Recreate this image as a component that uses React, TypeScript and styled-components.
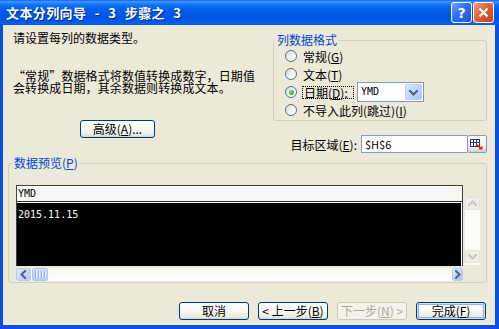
import React from "react";
import styled, { createGlobalStyle, css } from "styled-components";

const Global = createGlobalStyle`
  html, body { margin: 0; padding: 0; background: #ECE9D8; }
  body {
    font-family: "Noto Sans CJK SC", "Noto Sans", sans-serif;
    font-size: 12px;
    color: #000;
  }
  * { box-sizing: border-box; }
`;

const Window = styled.div`
  width: 499px;
  height: 329px;
  display: flex;
  flex-direction: column;
  overflow: hidden;
`;

const TitleBar = styled.div`
  height: 25px;
  flex: none;
  display: flex;
  align-items: center;
  justify-content: space-between;
  padding: 0 5px 0 6px;
  background: linear-gradient(
    to bottom,
    #0A5EEC 0%,
    #3E93FF 6%,
    #2A86FF 12%,
    #0D6FF6 22%,
    #0560EC 35%,
    #0257E5 55%,
    #0055E3 75%,
    #0258EA 88%,
    #0764F4 95%,
    #0451DA 100%
  );
`;

const TitleText = styled.div`
  color: #fff;
  font-weight: 700;
  font-size: 13px;
  letter-spacing: 0.4px;
  word-spacing: 5px;
  text-shadow: 1px 1px 0 #0A2A8A;
  white-space: nowrap;
`;

const CaptionButtons = styled.div`
  display: flex;
  gap: 1px;
`;

const CaptionButton = styled.div<{ $kind: "help" | "close" }>`
  width: 21px;
  height: 21px;
  border: 1px solid #fff;
  border-radius: 3px;
  display: flex;
  align-items: center;
  justify-content: center;
  color: #fff;
  font-family: "DejaVu Sans", sans-serif;
  font-weight: 700;
  font-size: 14px;
  ${(p) =>
    p.$kind === "help"
      ? css`
          background: linear-gradient(135deg, #6FA4FF 0%, #2D6FF0 45%, #1E55D6 100%);
        `
      : css`
          background: linear-gradient(135deg, #F19A7C 0%, #E0653C 45%, #C2401A 100%);
        `}
`;

const Content = styled.div`
  flex: 1;
  display: flex;
  flex-direction: column;
  background: #ECE9D8;
  border-style: solid;
  border-color: #0A4FDD;
  border-width: 0 4px 4px 3px;
`;

const Top = styled.div`
  display: grid;
  grid-template-columns: 267px 1fr;
  height: 128px;
`;

const LeftCol = styled.div`
  display: flex;
  flex-direction: column;
  align-items: flex-start;
  padding: 7px 0 0 10px;
`;

const Intro = styled.div`
  line-height: 12px;
  height: 12px;
  white-space: nowrap;
`;

const Para = styled.div`
  margin-top: 26px;
  line-height: 12px;
  white-space: nowrap;
  letter-spacing: 0.1px;
`;

const Key = styled.span`
  text-decoration: underline;
`;

const XPButton = styled.button<{ $default?: boolean; $w?: number }>`
  width: ${(p) => p.$w ?? 70}px;
  height: 18px;
  padding: 0;
  font-family: inherit;
  font-size: 12px;
  color: #000;
  line-height: 1;
  border: 1px solid #003C74;
  border-radius: 3px;
  background: linear-gradient(to bottom, #FFFFFF 0%, #F7F7F3 55%, #ECEBE4 85%, #D8D4C8 100%);
  display: flex;
  align-items: center;
  justify-content: center;
  white-space: nowrap;
  ${(p) =>
    p.$default &&
    css`
      box-shadow: inset 0 0 0 1px #CDE1FB, inset 0 0 0 2px #8FB1EA;
    `}
  &:disabled {
    color: #ACA899;
    border-color: #C9C7BA;
    background: #F5F4EA;
  }
`;

const AdvancedButton = styled(XPButton)`
  margin-top: 26px;
  margin-left: 67px;
`;

const RightCol = styled.div`
  display: flex;
  flex-direction: column;
  padding-top: 9px;
`;

const Group = styled.fieldset<{ $w: number }>`
  width: ${(p) => p.$w}px;
  margin: 0;
  padding: 0;
  border: 1px solid #D0D0BF;
  border-radius: 3px;
  min-width: 0;
`;

const Legend = styled.legend<{ $ml: number }>`
  margin-left: ${(p) => p.$ml}px;
  padding: 0 2px;
  line-height: 12px;
  height: 12px;
  color: #0046D5;
  white-space: nowrap;
`;

const FormatGroup = styled(Group)`
  margin-left: 3px;
`;

const FormatInner = styled.div`
  padding: 1px 0 1px 11px;
  display: flex;
  flex-direction: column;
`;

const RadioRow = styled.div`
  height: 18px;
  display: flex;
  align-items: center;
  white-space: nowrap;
`;

const Radio = styled.span<{ $checked?: boolean }>`
  width: 12px;
  height: 12px;
  flex: none;
  border-radius: 50%;
  border: 1px solid #51708F;
  background: linear-gradient(135deg, #D8D8D0 0%, #F2F2EE 50%, #FFFFFF 100%);
  display: flex;
  align-items: center;
  justify-content: center;
  margin-right: 6px;
  &::after {
    content: "";
    width: 5px;
    height: 5px;
    border-radius: 50%;
    background: ${(p) =>
      p.$checked ? "radial-gradient(circle at 35% 35%, #7BD47B, #1E9E1E)" : "transparent"};
  }
`;

const FocusLabel = styled.span`
  display: inline-block;
  width: 50px;
  line-height: 11px;
  outline: 1px dotted #000;
  outline-offset: 0px;
  padding: 0 1px;
`;

const Combo = styled.div`
  margin-left: 4px;
  width: 67px;
  height: 20px;
  border: 1px solid #7F9DB9;
  background: #fff;
  display: flex;
  align-items: center;
  justify-content: space-between;
  padding: 0 1px 0 3px;
`;

const MonoText = styled.span<{ $color?: string }>`
  font-family: "DejaVu Sans Mono", "Liberation Mono", monospace;
  font-size: 10px;
  line-height: 1;
  color: ${(p) => p.$color ?? "#000"};
`;

const ComboButton = styled.div`
  width: 17px;
  height: 16px;
  border: 1px solid #B9CEF5;
  border-radius: 2px;
  background: linear-gradient(135deg, #DCE7FD 0%, #C3D5FB 50%, #AFC6F6 100%);
  display: flex;
  align-items: center;
  justify-content: center;
`;

const TargetRow = styled.div`
  margin-top: 14px;
  margin-right: 8px;
  height: 18px;
  display: flex;
  align-items: center;
  justify-content: flex-end;
  white-space: nowrap;
`;

const TargetLabel = styled.span`
  margin-right: 4px;
`;

const TextField = styled.div`
  width: 106px;
  height: 18px;
  border: 1px solid #7F9DB9;
  border-right: none;
  background: #fff;
  display: flex;
  align-items: center;
  padding-left: 3px;
  font-size: 11px;
`;

const RefButton = styled.div`
  width: 20px;
  height: 18px;
  border: 1px solid #7F9DB9;
  border-radius: 2px;
  background: linear-gradient(to bottom, #FFFFFF 0%, #EEEDE6 70%, #D6D2C6 100%);
  display: flex;
  align-items: center;
  justify-content: center;
`;

const PreviewGroup = styled(Group)`
  margin: 4px 0 0 5px;
`;

const PreviewInner = styled.div`
  padding: 16px 0 1px 7px;
`;

const Preview = styled.div`
  display: grid;
  grid-template-columns: 447px 15px;
  column-gap: 2px;
  height: 96px;
`;

const PreviewMain = styled.div`
  display: flex;
  flex-direction: column;
`;

const Sheet = styled.div`
  height: 81px;
  border: 1px solid #404040;
  border-bottom: none;
  background: #000;
  display: flex;
  flex-direction: column;
`;

const SheetHeader = styled.div`
  height: 16px;
  flex: none;
  background: #F7F7F5;
  border-bottom: 1px solid #303030;
  box-shadow: 0 1px 0 #fff;
  display: flex;
  align-items: center;
  padding-left: 1px;
`;

const SheetBody = styled.div`
  flex: 1;
  border-right: 1px solid #fff;
  margin-top: 1px;
  padding: 1px 0 0 1px;
`;

const HScroll = styled.div`
  height: 15px;
  display: flex;
  align-items: flex-end;
  background: linear-gradient(to bottom, #ECE9D8 0%, #ECE9D8 15%, #F8F8F4 16%, #FDFDFB 100%);
`;

const HTrack = styled.div`
  flex: 1;
`;

const ArrowBtn = styled.div<{ $disabled?: boolean; $w?: number; $h?: number }>`
  width: ${(p) => p.$w ?? 15}px;
  height: ${(p) => p.$h ?? 13}px;
  flex: none;
  border-radius: 2px;
  display: flex;
  align-items: center;
  justify-content: center;
  ${(p) =>
    p.$disabled
      ? css`
          background: #F0EFE8;
          border: 1px solid #E4E2D6;
        `
      : css`
          background: linear-gradient(135deg, #E1EAFE 0%, #C6D6FC 50%, #B0C6F7 100%);
          border: 1px solid #B7CBF5;
        `}
`;

const Thumb = styled.div`
  width: 16px;
  height: 13px;
  margin-left: 1px;
  border-radius: 2px;
  border: 1px solid #B1C6F4;
  background: linear-gradient(to bottom, #D4E0FD 0%, #C3D4FB 50%, #B5CAF8 100%);
  display: flex;
  align-items: center;
  justify-content: center;
  gap: 1px;
`;

const Grip = styled.span`
  width: 1px;
  height: 7px;
  background: #8EAEF0;
  box-shadow: 1px 0 0 #EEF3FE;
  margin-right: 1px;
`;

const VScroll = styled.div`
  margin-top: 12px;
  height: 68px;
  display: flex;
  flex-direction: column;
  justify-content: space-between;
  background: #FBFBF8;
  padding-bottom: 2px;
`;

const ButtonRow = styled.div`
  margin-top: 19px;
  padding-right: 9px;
  display: flex;
  justify-content: flex-end;
  gap: 9px;
`;

const Chevron = ({ dir, color }: { dir: "up" | "down" | "left" | "right"; color: string }) => {
  const pts: Record<string, string> = {
    up: "1,6 4.5,2.5 8,6",
    down: "1,3 4.5,6.5 8,3",
    left: "6,1 2.5,4.5 6,8",
    right: "3,1 6.5,4.5 3,8",
  };
  return (
    <svg width="9" height="9" viewBox="0 0 9 9">
      <polyline points={pts[dir]} fill="none" stroke={color} strokeWidth="2" strokeLinecap="square" />
    </svg>
  );
};

export default function App() {
  return (
    <>
      <Global />
      <Window>
        <TitleBar>
          <TitleText>文本分列向导 - 3 步骤之 3</TitleText>
          <CaptionButtons>
            <CaptionButton $kind="help">?</CaptionButton>
            <CaptionButton $kind="close">
              <svg width="11" height="11" viewBox="0 0 11 11">
                <path d="M1.5 1.5 L9.5 9.5 M9.5 1.5 L1.5 9.5" stroke="#fff" strokeWidth="2" />
              </svg>
            </CaptionButton>
          </CaptionButtons>
        </TitleBar>
        <Content>
          <Top>
            <LeftCol>
              <Intro>请设置每列的数据类型。</Intro>
              <Para>
                “常规”数据格式将数值转换成数字，日期值
                <br />
                会转换成日期，其余数据则转换成文本。
              </Para>
              <AdvancedButton $w={75}>
                高级(<Key>A</Key>)...
              </AdvancedButton>
            </LeftCol>
            <RightCol>
              <FormatGroup $w={214}>
                <Legend $ml={1}>列数据格式</Legend>
                <FormatInner>
                  <RadioRow>
                    <Radio />
                    常规(<Key>G</Key>)
                  </RadioRow>
                  <RadioRow>
                    <Radio />
                    文本(<Key>T</Key>)
                  </RadioRow>
                  <RadioRow>
                    <Radio $checked />
                    <FocusLabel>
                      日期(<Key>D</Key>):
                    </FocusLabel>
                    <Combo>
                      <MonoText>YMD</MonoText>
                      <ComboButton>
                        <Chevron dir="down" color="#4D6185" />
                      </ComboButton>
                    </Combo>
                  </RadioRow>
                  <RadioRow>
                    <Radio />
                    不导入此列(跳过)(<Key>I</Key>)
                  </RadioRow>
                </FormatInner>
              </FormatGroup>
              <TargetRow>
                <TargetLabel>
                  目标区域(<Key>E</Key>):
                </TargetLabel>
                <TextField>$H$6</TextField>
                <RefButton>
                  <svg width="14" height="11" viewBox="0 0 14 11">
                    <rect x="0.5" y="0.5" width="9" height="7" fill="#fff" stroke="#1F3A73" />
                    <path d="M0.5 3.5 H9.5 M3.5 0.5 V7.5 M6.5 0.5 V7.5" stroke="#1F3A73" strokeWidth="1" />
                    <path d="M6 5 L11 9.5" stroke="#D81E1E" strokeWidth="1.6" />
                    <path d="M12.5 10.5 L8.5 10.5 L12.5 6.5 Z" fill="#D81E1E" />
                  </svg>
                </RefButton>
              </TargetRow>
            </RightCol>
          </Top>
          <PreviewGroup $w={479}>
            <Legend $ml={3}>
              数据预览(<Key>P</Key>)
            </Legend>
            <PreviewInner>
              <Preview>
                <PreviewMain>
                  <Sheet>
                    <SheetHeader>
                      <MonoText>YMD</MonoText>
                    </SheetHeader>
                    <SheetBody>
                      <MonoText $color="#fff">2015.11.15</MonoText>
                    </SheetBody>
                  </Sheet>
                  <HScroll>
                    <ArrowBtn>
                      <Chevron dir="left" color="#4D6185" />
                    </ArrowBtn>
                    <Thumb>
                      <Grip />
                      <Grip />
                      <Grip />
                      <Grip />
                    </Thumb>
                    <HTrack />
                    <ArrowBtn $w={11}>
                      <Chevron dir="right" color="#4D6185" />
                    </ArrowBtn>
                  </HScroll>
                </PreviewMain>
                <VScroll>
                  <ArrowBtn $disabled $w={15} $h={13}>
                    <Chevron dir="up" color="#C9C7BA" />
                  </ArrowBtn>
                  <ArrowBtn $disabled $w={15} $h={13}>
                    <Chevron dir="down" color="#C9C7BA" />
                  </ArrowBtn>
                </VScroll>
              </Preview>
            </PreviewInner>
          </PreviewGroup>
          <ButtonRow>
            <XPButton>取消</XPButton>
            <XPButton>
              &lt; 上一步(<Key>B</Key>)
            </XPButton>
            <XPButton disabled>
              下一步(<Key>N</Key>) &gt;
            </XPButton>
            <XPButton $default>
              完成(<Key>F</Key>)
            </XPButton>
          </ButtonRow>
        </Content>
      </Window>
    </>
  );
}
